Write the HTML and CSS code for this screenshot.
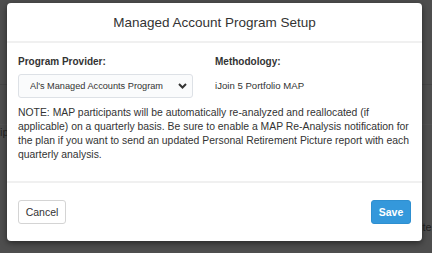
FILE: index.html
```html
<!DOCTYPE html>
<html lang="en">
<head>
  <meta charset="UTF-8">
  <title>Managed Account Program Setup</title>
  <link rel="stylesheet" href="styles.css">
</head>
<body>
  <div class="backdrop">
    <div class="page-stripe stripe-a"></div>
    <div class="page-stripe stripe-b"></div>
    <span class="page-text text-left">ip</span>
    <span class="page-text text-right">ite</span>
  </div>

  <div class="modal">
    <div class="modal-header">
      <h1>Managed Account Program Setup</h1>
    </div>

    <div class="modal-body">
      <div class="fields">
        <div class="field">
          <label for="provider">Program Provider:</label>
          <div class="select-wrap">
            <select id="provider">
              <option>Al's Managed Accounts Program</option>
            </select>
            <svg class="chevron" width="9" height="6" viewBox="0 0 9 6">
              <path d="M1 1 L4.5 4.5 L8 1" fill="none" stroke="#333" stroke-width="2"/>
            </svg>
          </div>
        </div>
        <div class="field">
          <label>Methodology:</label>
          <div class="value">iJoin 5 Portfolio MAP</div>
        </div>
      </div>

      <p class="note">
        NOTE: MAP participants will be automatically re-analyzed and reallocated (if<br>
        applicable) on a quarterly basis. Be sure to enable a MAP Re-Analysis notification for<br>
        the plan if you want to send an updated Personal Retirement Picture report with each<br>
        quarterly analysis.
      </p>
    </div>

    <div class="modal-footer">
      <button class="btn btn-cancel">Cancel</button>
      <button class="btn btn-save">Save</button>
    </div>
  </div>
</body>
</html>
```

FILE: styles.css
```css
* {
  margin: 0;
  padding: 0;
  box-sizing: border-box;
}

body {
  font-family: 'Liberation Sans', Arial, sans-serif;
  background: #4e4e4e;
  width: 432px;
  height: 253px;
  overflow: hidden;
  position: relative;
  color: #333;
}

/* faint page behind the overlay */
.backdrop {
  position: absolute;
  inset: 0;
}

.page-stripe {
  position: absolute;
  left: 0;
  right: 0;
  height: 1px;
  background: #464646;
}

.stripe-a { top: 84px; }
.stripe-b { top: 124px; background: #525252; }

.page-text {
  position: absolute;
  font-size: 11px;
  color: #222;
}

.text-left { left: 0; top: 126px; }
.text-right { left: 420px; top: 221px; }

.modal {
  position: absolute;
  left: 7px;
  top: 3px;
  width: 415px;
  height: 238px;
  background: #fff;
  border-radius: 4px;
  box-shadow: 0 2px 6px rgba(0, 0, 0, 0.5);
  display: flex;
  flex-direction: column;
}

.modal-header {
  height: 40px;
  border-bottom: 2px solid #f0f0f0;
  display: flex;
  align-items: center;
  justify-content: center;
}

.modal-header h1 {
  font-size: 13.5px;
  font-weight: normal;
  color: #333;
}

.modal-body {
  padding: 12px 11px 0;
  flex: 1;
  border-bottom: 2px solid #f0f0f0;
}

.fields {
  display: grid;
  grid-template-columns: 175px 1fr;
  column-gap: 22px;
}

.field label {
  display: block;
  font-size: 10px;
  font-weight: bold;
  color: #333;
  margin-bottom: 6px;
  line-height: 13px;
}

.select-wrap {
  position: relative;
  width: 175px;
}

select {
  width: 100%;
  height: 24px;
  appearance: none;
  border: 1px solid #dde1e6;
  border-radius: 3px;
  background: #fafbfc;
  font-family: inherit;
  font-size: 9.2px;
  color: #333;
  padding: 0 0 0 11px;
}

.chevron {
  position: absolute;
  right: 6px;
  top: 9px;
  pointer-events: none;
}

.value {
  font-size: 9.6px;
  line-height: 24px;
  color: #333;
}

.note {
  margin-top: 8px;
  font-size: 10.4px;
  line-height: 14px;
  color: #333;
  white-space: nowrap;
}

.modal-footer {
  height: 58px;
  padding: 0 11px;
  display: flex;
  align-items: center;
  justify-content: space-between;
}

.btn {
  height: 24px;
  border-radius: 3px;
  font-family: inherit;
  font-size: 10.5px;
}

.btn-cancel {
  width: 48px;
  background: #fff;
  border: 1px solid #d4d4d4;
  color: #333;
}

.btn-save {
  width: 40px;
  background: #3498db;
  border: 1px solid #2e8fd0;
  color: #fff;
  font-weight: bold;
}
```
